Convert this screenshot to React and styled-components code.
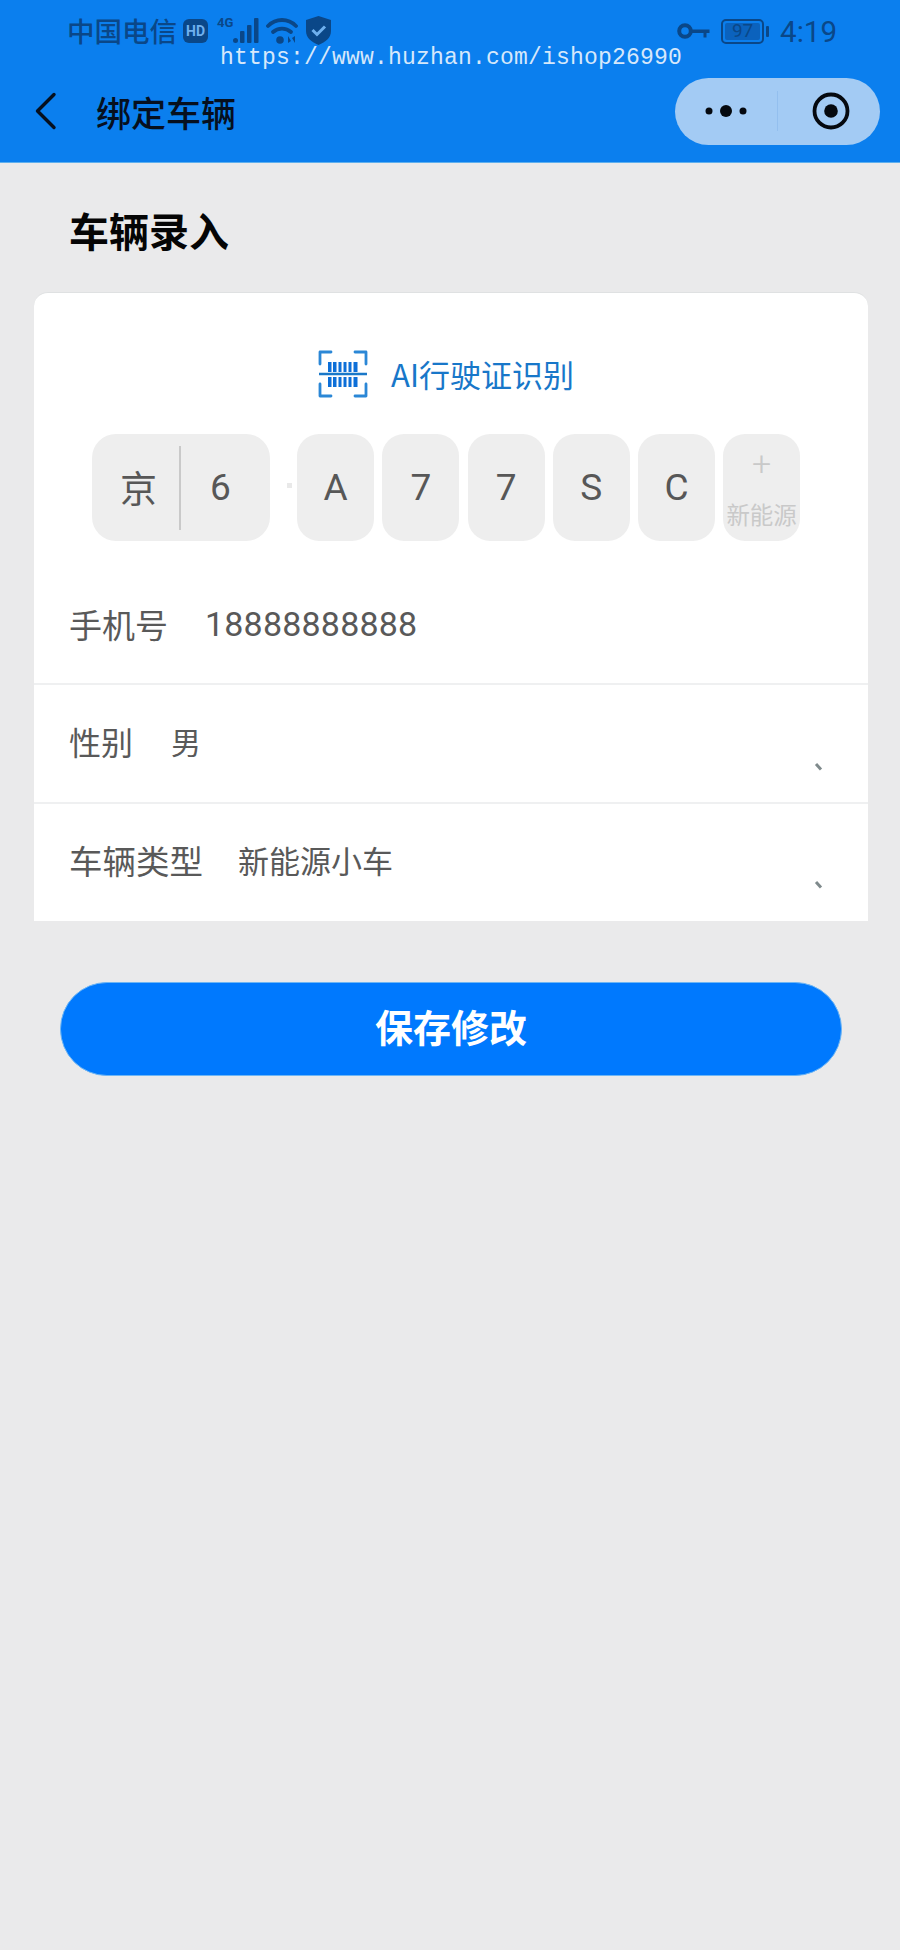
import React from "react";
import styled, { createGlobalStyle } from "styled-components";

const CJK = `"Noto Sans CJK SC", "Noto Sans", sans-serif`;
const LATIN = `Roboto, "Noto Sans CJK SC", sans-serif`;
const STATUS = "#0a4788";

const Global = createGlobalStyle`
  html, body { margin: 0; padding: 0; background: #eaeaeb; }
  * { box-sizing: border-box; }
`;

const Page = styled.div`
  position: relative;
  width: 900px;
  height: 1950px;
  background: #eaeaeb;
  font-family: ${CJK};
  overflow: hidden;
`;

const Header = styled.header`
  height: 163px;
  background: #0b7fee;
  border-bottom: 1px solid #5fb0ee;
`;

const StatusBar = styled.div`
  height: 62px;
  display: flex;
  align-items: center;
  padding: 0 63px 0 67px;
  color: ${STATUS};
`;

const Carrier = styled.span`
  font-size: 27.5px;
  font-weight: 500;
  line-height: 1;
  margin-right: 6px;
`;

const HdBadge = styled.span`
  width: 25px;
  height: 24px;
  border-radius: 6px;
  background: ${STATUS};
  color: #6fb0ee;
  font: 700 14px/24px ${LATIN};
  text-align: center;
  margin-right: 9px;
`;

const NetLabel = styled.span`
  font: 700 13px/1 ${LATIN};
  align-self: flex-start;
  margin-top: 16px;
  margin-right: -1px;
`;

const StatusGroup = styled.div`
  display: flex;
  align-items: center;
  margin-left: auto;
`;

const Battery = styled.div`
  width: 43px;
  height: 25px;
  border: 2.5px solid ${STATUS};
  border-radius: 5px;
  padding: 2px;
  margin-left: 11px;
`;

const BatteryFill = styled.div`
  height: 100%;
  background: #0b62bd;
  border-radius: 2px;
  color: ${STATUS};
  font: 400 19px/16px ${LATIN};
  text-align: center;
`;

const BatteryNub = styled.span`
  width: 3px;
  height: 11px;
  background: ${STATUS};
  border-radius: 1px;
  margin-left: 2px;
`;

const Clock = styled.span`
  font: 400 29.5px/1 ${LATIN};
  margin: 3px 0 0 11px;
`;

const Watermark = styled.div`
  position: absolute;
  left: 220px;
  top: 45px;
  font: 400 23px/1.2 "Liberation Mono", monospace;
  letter-spacing: 0.2px;
  color: #d6e8fb;
  white-space: nowrap;
  z-index: 2;
`;

const NavBar = styled.nav`
  height: 98px;
  display: flex;
  align-items: center;
  padding: 0 20px 0 34px;
`;

const BackIcon = styled.svg`
  width: 24px;
  height: 38px;
  margin-right: 38px;
`;

const NavTitle = styled.h1`
  margin: 0;
  font: 500 35px/1 ${CJK};
  color: #06101f;
`;

const Capsule = styled.div`
  margin-left: auto;
  width: 205px;
  height: 67px;
  border-radius: 34px;
  background: #a3cbf4;
  display: grid;
  grid-template-columns: 103px 1fr;
  align-items: center;
`;

const CapsuleCell = styled.div`
  height: 40px;
  display: flex;
  align-items: center;
  justify-content: center;
  border-right: ${(p) => (p.$divider ? "1px solid #93bfee" : "none")};
  padding-left: ${(p) => (p.$divider ? 0 : 3)}px;
`;

const Content = styled.main`
  padding: 0 32px 0 34px;
`;

const SectionTitle = styled.h2`
  margin: 0;
  padding: 5px 0 0 35px;
  height: 129px;
  display: flex;
  align-items: center;
  font: 700 40px/1 ${CJK};
  color: #050505;
`;

const Card = styled.section`
  background: #fff;
  border-top: 1px solid #dfe1e2;
  border-radius: 14px 14px 0 0;
`;

const ScanRow = styled.div`
  height: 141px;
  display: flex;
  align-items: center;
  justify-content: center;
  gap: 23px;
  padding: 20px 10px 0 0;
  color: #1877c9;
  font: 400 31px/1 ${CJK};
`;

const PlateRow = styled.div`
  display: flex;
  padding-left: 58px;
  gap: 8.2px;
`;

const ProvinceBox = styled.div`
  position: relative;
  width: 178px;
  height: 107px;
  margin-right: 19px;
  display: grid;
  grid-template-columns: 89px 1fr;
  align-items: center;
  background: #eeeeee;
  border-radius: 24px;
  color: #575757;
  text-align: center;
  &::after {
    content: "";
    position: absolute;
    right: -22px;
    top: 49px;
    width: 5px;
    height: 5px;
    background: #e9e9e9;
  }
`;

const ProvinceCell = styled.span`
  height: 84px;
  display: flex;
  align-items: center;
  justify-content: center;
  border-right: ${(p) => (p.$divider ? "2px solid #c9c9c9" : "none")};
  font: 400 37px/1 ${(p) => (p.$latin ? LATIN : CJK)};
  padding: ${(p) => (p.$latin ? "0 10px 0 0" : "0 0 0 6px")};
`;

const PlateCell = styled.div`
  width: 77px;
  height: 107px;
  background: #eeeeee;
  border-radius: 22px;
  display: flex;
  align-items: center;
  justify-content: center;
  font: 400 37px/1 ${LATIN};
  color: #575757;
`;

const NewEnergyCell = styled(PlateCell)`
  flex-direction: column;
  justify-content: flex-start;
  color: #c9c9c9;
`;

const Plus = styled.span`
  font: 300 34px/1 ${LATIN};
  margin-top: 12px;
  height: 57px;
`;

const NewEnergyLabel = styled.span`
  font: 400 23.5px/1 ${CJK};
  white-space: nowrap;
`;

const Row = styled.div`
  display: flex;
  align-items: flex-start;
  height: ${(p) => p.$h}px;
  padding: ${(p) => p.$pt}px 44px 0 35px;
  border-bottom: ${(p) => (p.$last ? "none" : "2px solid #eff0f1")};
  color: #595959;
`;

const RowLabel = styled.span`
  font: 400 ${(p) => p.$size || 32}px/48px ${CJK};
  margin-right: ${(p) => p.$gap}px;
  white-space: nowrap;
`;

const RowValue = styled.span`
  font: 400 ${(p) => p.$size || 30}px/48px ${(p) => (p.$latin ? LATIN : CJK)};
  letter-spacing: ${(p) => (p.$latin ? "0.2px" : "0")};
  white-space: nowrap;
`;

const Tick = styled.svg`
  width: 10px;
  height: 8px;
  margin-left: auto;
  align-self: flex-start;
  margin-top: ${(p) => p.$mt}px;
`;

const SaveButton = styled.button`
  display: block;
  width: 782px;
  height: 94px;
  margin: 61px 0 0 26px;
  padding: 0 0 6px;
  background: #0079fe;
  border: 1px solid #6db6f5;
  border-radius: 47px;
  color: #fff;
  font: 700 38px/1 ${CJK};
`;

const BAR_X = [9, 14, 19.5, 24.5, 29.5, 34.5];
const BAR_W = [3.5, 3.5, 3, 3, 3, 4];

const ScanIcon = () => (
  <svg width="50" height="50" viewBox="0 0 50 50" fill="none">
    <path
      d="M13 3H2v12M37 3h11v12M2 35v12h11M48 35v12H37"
      stroke="#2b87d6"
      strokeWidth="2.8"
      strokeLinecap="round"
      strokeLinejoin="round"
    />
    <path d="M1 25h48" stroke="#1a78c8" strokeWidth="2.4" />
    <g fill="#0d6fd8">
      {BAR_X.map((x, i) => (
        <React.Fragment key={x}>
          <rect x={x + 1} y="13" width={BAR_W[i]} height="10" />
          <rect x={x + 1} y="28" width={BAR_W[i]} height="10" />
        </React.Fragment>
      ))}
    </g>
  </svg>
);

const Signal = () => (
  <svg width="29" height="27" viewBox="0 0 29 27" fill={STATUS} style={{ marginRight: 5 }}>
    <rect x="1" y="20" width="5" height="5" rx="2.5" />
    <rect x="8" y="13" width="4.500" height="12" rx="1" />
    <rect x="15" y="7" width="4.500" height="18" rx="1" />
    <rect x="22" y="0" width="4.500" height="25" rx="1" />
  </svg>
);

const Wifi = () => (
  <svg width="32" height="28" viewBox="0 0 32 28" fill="none" style={{ marginRight: 8 }}>
    <g stroke={STATUS} strokeWidth="3.800" strokeLinecap="round">
      <path d="M2 9C10 1 22 1 30 9" />
      <path d="M7 15c5-4.600 13-4.600 18 0" />
    </g>
    <circle cx="14" cy="23" r="3.800" fill={STATUS} />
    <path d="M22 19v7l3-2zM29 26v-7l-3 2z" fill={STATUS} />
  </svg>
);

const Shield = () => (
  <svg width="25" height="29" viewBox="0 0 25 29" style={{ marginTop: -1 }}>
    <path d="M12.500 0L25 4v11c0 7-5.500 11-12.500 14C5.500 26 0 22 0 15V4z" fill={STATUS} />
    <path d="M6.500 14l4.500 4.500 8-8" stroke="#6fb0ee" strokeWidth="3" fill="none" />
  </svg>
);

const KeyIcon = () => (
  <svg width="33" height="18" viewBox="0 0 33 18" fill="none">
    <circle cx="8" cy="9" r="5.800" stroke={STATUS} strokeWidth="4" />
    <path d="M14 7.500h18.500v3.500h-3v4.500h-3V11H14z" fill={STATUS} />
  </svg>
);

const App = () => (
  <Page>
    <Global />
    <Header>
      <StatusBar>
        <Carrier>中国电信</Carrier>
        <HdBadge>HD</HdBadge>
        <NetLabel>4G</NetLabel>
        <Signal />
        <Wifi />
        <Shield />
        <StatusGroup>
          <KeyIcon />
          <Battery>
            <BatteryFill>97</BatteryFill>
          </Battery>
          <BatteryNub />
          <Clock>4:19</Clock>
        </StatusGroup>
      </StatusBar>
      <NavBar>
        <BackIcon viewBox="0 0 24 38" fill="none">
          <path d="M20 2.500L3.500 19 20 35.500" stroke="#06101f" strokeWidth="3.400" strokeLinecap="round" strokeLinejoin="round" />
        </BackIcon>
        <NavTitle>绑定车辆</NavTitle>
        <Capsule>
          <CapsuleCell $divider>
            <svg width="42" height="16" viewBox="0 0 42 16" fill="#05090f">
              <circle cx="4" cy="8" r="3.500" />
              <circle cx="21" cy="8" r="6" />
              <circle cx="38" cy="8" r="3.500" />
            </svg>
          </CapsuleCell>
          <CapsuleCell>
            <svg width="38" height="38" viewBox="0 0 38 38" fill="none">
              <circle cx="19" cy="19" r="16.500" stroke="#05090f" strokeWidth="3.800" />
              <circle cx="19" cy="19" r="6.800" fill="#05090f" />
            </svg>
          </CapsuleCell>
        </Capsule>
      </NavBar>
    </Header>
    <Watermark>https://www.huzhan.com/ishop26990</Watermark>
    <Content>
      <SectionTitle>车辆录入</SectionTitle>
      <Card>
        <ScanRow>
          <ScanIcon />
          <span>AI行驶证识别</span>
        </ScanRow>
        <PlateRow>
          <ProvinceBox>
            <ProvinceCell $divider>京</ProvinceCell>
            <ProvinceCell $latin>6</ProvinceCell>
          </ProvinceBox>
          {["A", "7", "7", "S", "C"].map((c, i) => (
            <PlateCell key={i}>{c}</PlateCell>
          ))}
          <NewEnergyCell>
            <Plus>+</Plus>
            <NewEnergyLabel>新能源</NewEnergyLabel>
          </NewEnergyCell>
        </PlateRow>
        <Row $h={144} $pt={59}>
          <RowLabel $size={33} $gap={37}>手机号</RowLabel>
          <RowValue $latin $size={34}>18888888888</RowValue>
        </Row>
        <Row $h={119} $pt={32}>
          <RowLabel $gap={38}>性别</RowLabel>
          <RowValue>男</RowValue>
          <Tick $mt={46} viewBox="0 0 10 8">
            <path d="M2 1l5 5.500" stroke="#7f8a8c" strokeWidth="3" />
          </Tick>
        </Row>
        <Row $h={117} $last $pt={32}>
          <RowLabel $size={33.5} $gap={35}>车辆类型</RowLabel>
          <RowValue $size={31}>新能源小车</RowValue>
          <Tick $mt={45} viewBox="0 0 10 8">
            <path d="M2 1l5 5.500" stroke="#7f8a8c" strokeWidth="3" />
          </Tick>
        </Row>
      </Card>
      <SaveButton>保存修改</SaveButton>
    </Content>
  </Page>
);

export default App;
